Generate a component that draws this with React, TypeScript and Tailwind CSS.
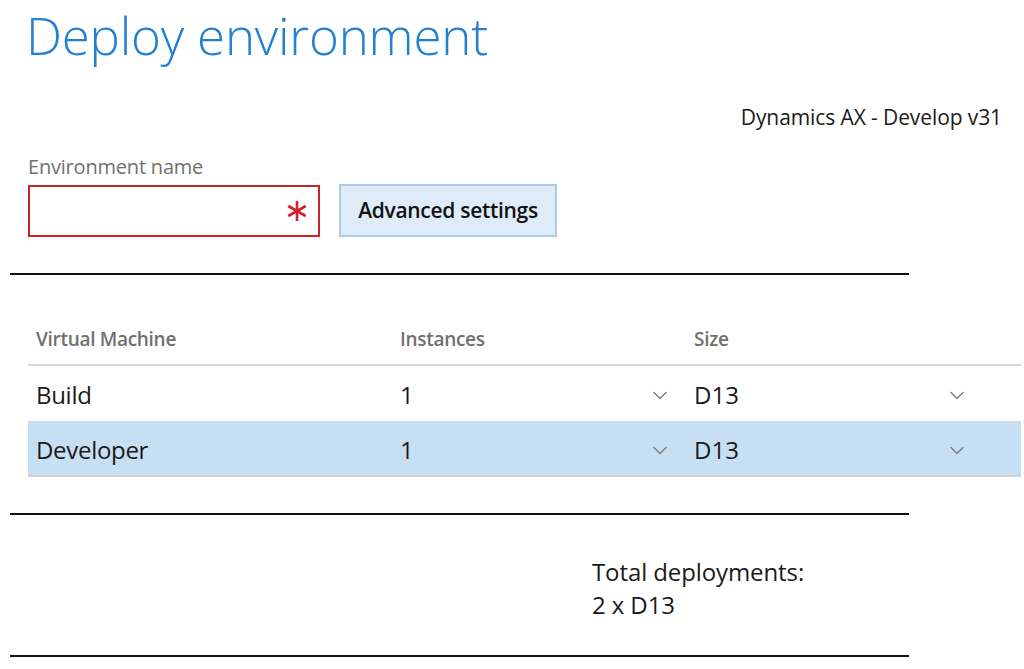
import React from "react";

function Chevron() {
  return (
    <svg width="16" height="10" viewBox="0 0 16 10" className="shrink-0">
      <path d="M1.5 2 L8 8.5 L14.5 2" fill="none" stroke="#7a7a7a" strokeWidth="1.3" />
    </svg>
  );
}

function Asterisk() {
  return (
    <svg width="20" height="22" viewBox="0 0 20 22">
      <g stroke="#d0202a" strokeWidth="2.6" strokeLinecap="butt">
        <line x1="10" y1="1" x2="10" y2="21" />
        <line x1="1.3" y1="6" x2="18.7" y2="16" />
        <line x1="1.3" y1="16" x2="18.7" y2="6" />
      </g>
    </svg>
  );
}

const rows = [
  { name: "Build", inst: "1", size: "D13", selected: false },
  { name: "Developer", inst: "1", size: "D13", selected: true },
];

export default function App() {
  return (
    <div
      className="w-[1024px] h-[669px] bg-white overflow-hidden text-[#1a1a1a]"
      style={{ fontFamily: '"Open Sans", "Noto Sans", sans-serif' }}
    >
      <div className="h-[80px] pl-[26px] flex items-start">
        <h1 className="text-[51px] font-light leading-[70px] text-[#2280d3] tracking-[-0.2px]">
          Deploy environment
        </h1>
      </div>
      <div className="h-[72px] flex items-center justify-end pr-[22px] pt-[2px]">
        <span className="text-[21px] leading-[26px] tracking-[-0.1px]">Dynamics AX - Develop v31</span>
      </div>
      <div className="pl-[28px]">
        <div className="h-[30px] flex items-center text-[20px] text-[#707070] tracking-[-0.2px]">
          Environment name
        </div>
        <div className="flex items-center gap-[19px] mt-[2px]">
          <div className="w-[292px] h-[52px] border-2 border-[#c8222b] flex items-center justify-end pr-[11px]">
            <Asterisk />
          </div>
          <button className="w-[218px] h-[53px] bg-[#deebf8] border-2 border-[#a9cbe8] text-[21px] font-semibold tracking-[-0.3px] text-[#111]">
            Advanced settings
          </button>
        </div>
      </div>
      <div className="mt-[36px] ml-[10px] w-[899px] h-[2px] bg-[#111]" />
      <div className="mt-[38px] ml-[28px] mr-[3px]">
        <div className="flex h-[53px] border-b-2 border-[#d6d6d6] text-[19px] font-semibold text-[#707070] tracking-[-0.3px] pt-[1px]">
          <div className="w-[361px] pl-[8px] flex items-center">Virtual Machine</div>
          <div className="w-[295px] pl-[11px] flex items-center">Instances</div>
          <div className="flex-1 pl-[10px] flex items-center">Size</div>
        </div>
        {rows.map((r) => (
          <div
            key={r.name}
            className={
              r.selected
                ? "flex h-[56px] items-center text-[24px] bg-[#c7dff2] border-b-2 border-[#cdd3d8] pt-[4px]"
                : "flex h-[55px] items-center text-[24px] pt-[2px]"
            }
          >
            <div className="w-[361px] pl-[8px] tracking-[-0.3px]">{r.name}</div>
            <div className="w-[295px] pl-[11px] pr-[16px] flex items-center justify-between">
              <span>{r.inst}</span>
              <Chevron />
            </div>
            <div className="flex-1 pl-[10px] pr-[56px] flex items-center justify-between">
              <span>{r.size}</span>
              <Chevron />
            </div>
          </div>
        ))}
      </div>
      <div className="mt-[36px] ml-[10px] w-[899px] h-[2px] bg-[#111]" />
      <div className="h-[140px] pl-[592px] pt-[40px] text-[24px] leading-[33px] tracking-[-0.1px]">
        <div>Total deployments:</div>
        <div>2 x D13</div>
      </div>
      <div className="ml-[10px] w-[899px] h-[2px] bg-[#111]" />
    </div>
  );
}
